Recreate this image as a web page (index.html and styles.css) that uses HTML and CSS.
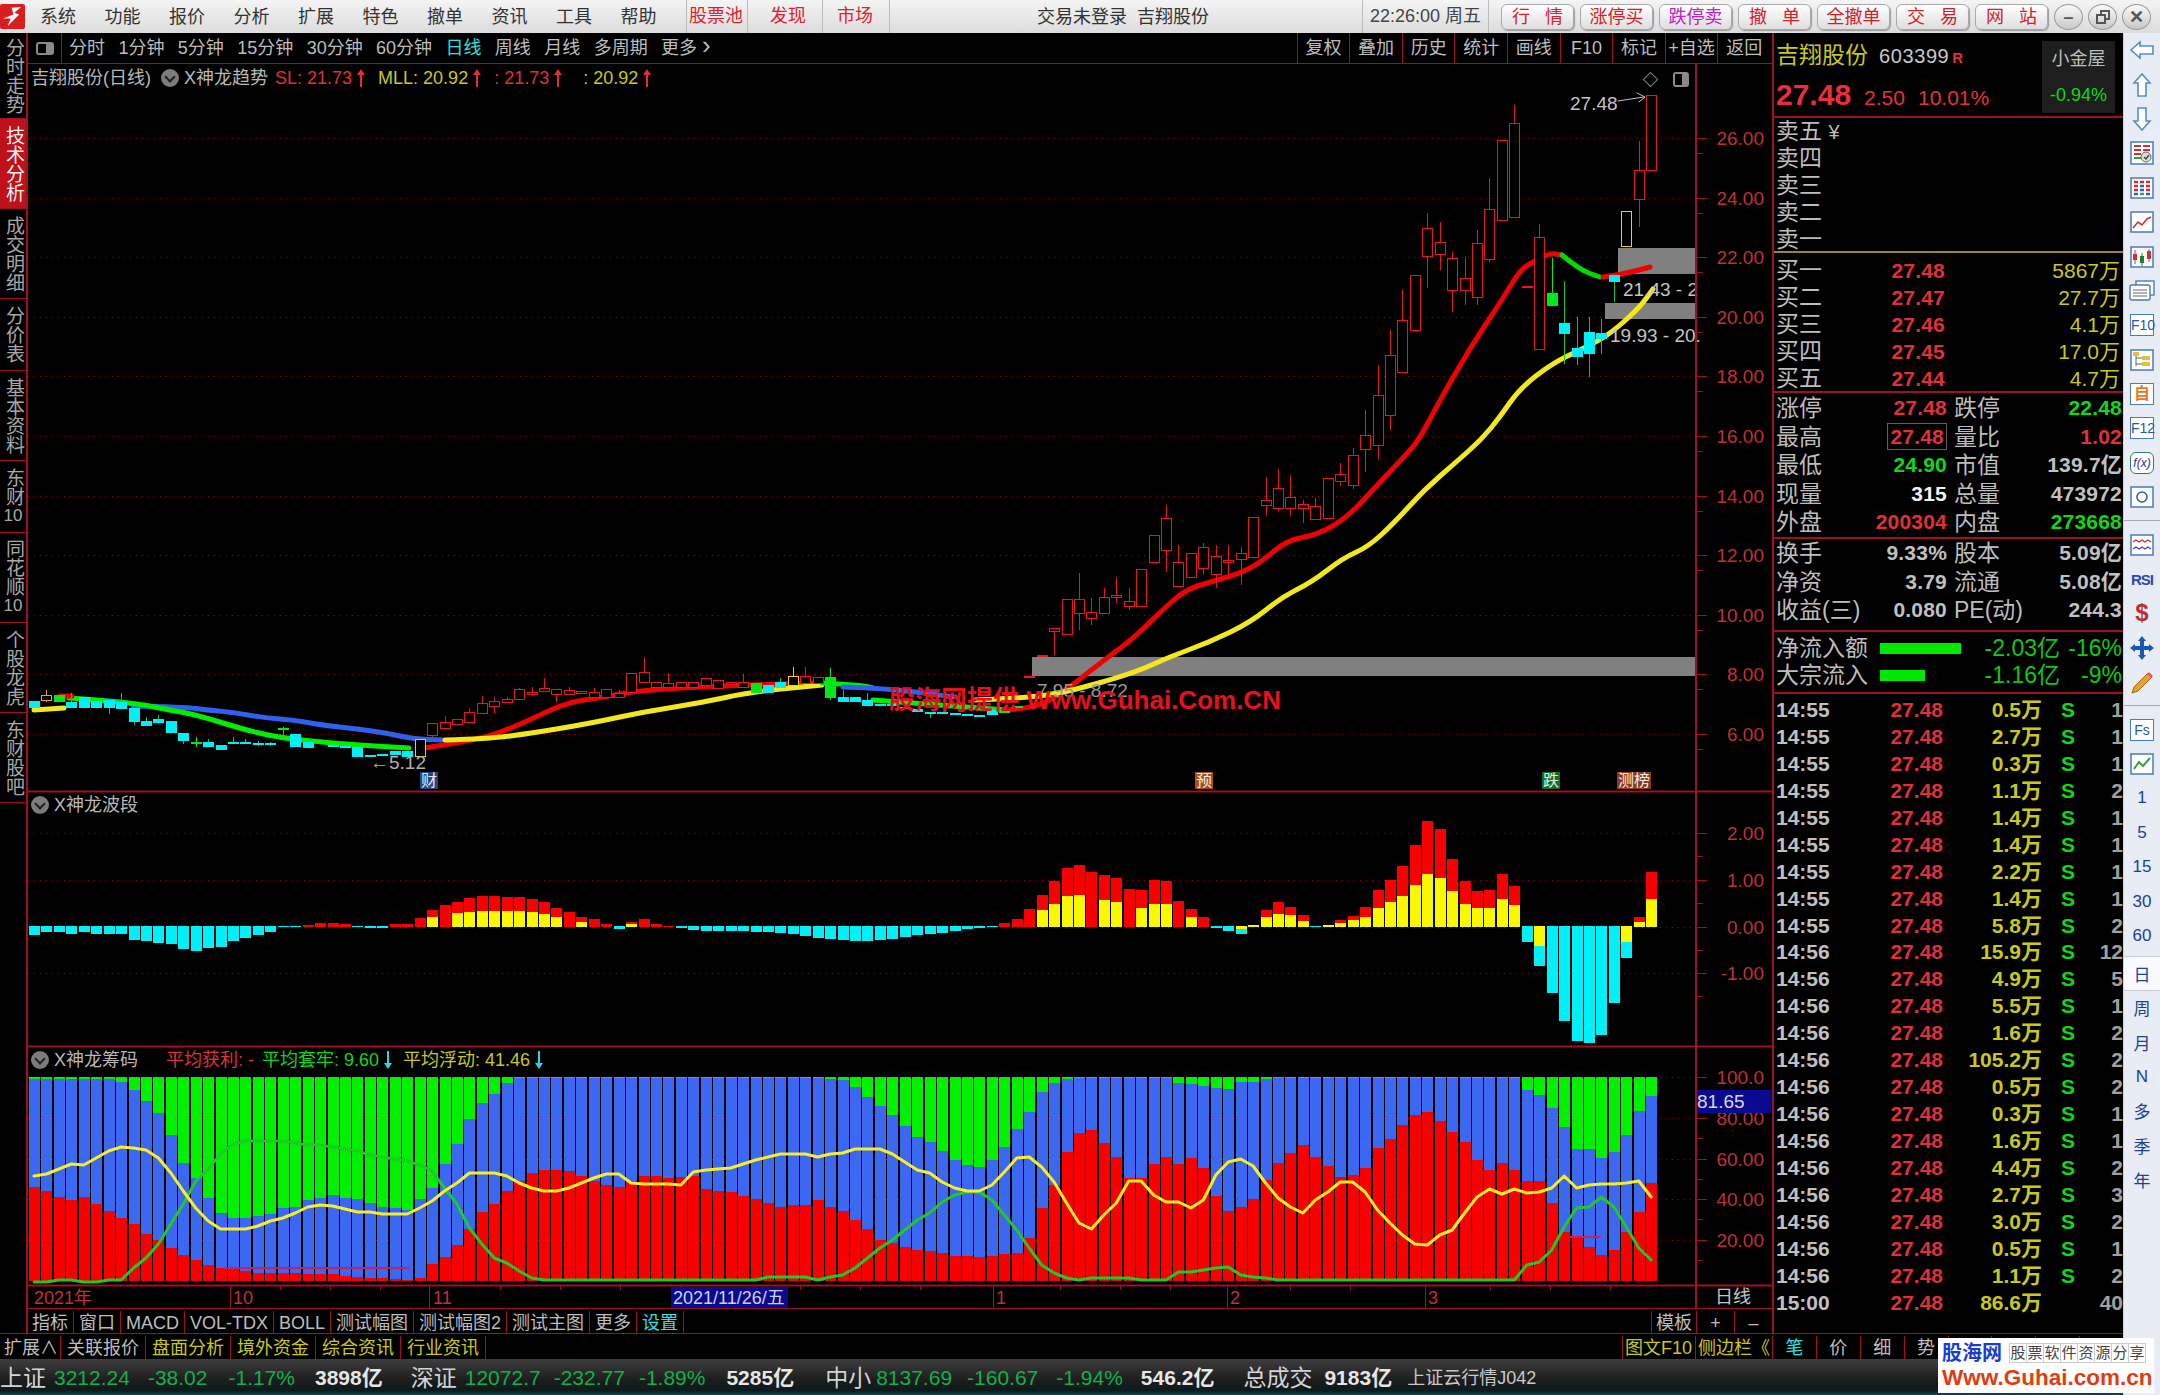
FILE: index.html
```html
<!DOCTYPE html>
<html lang="zh-CN">
<head>
  <meta charset="UTF-8">
  <title>吉翔股份 日线</title>
  <link rel="stylesheet" href="styles.css">
</head>
<body>
  <div class="app">
    <div class="titlebar">
      <svg class="logo" viewBox="0 0 26 26"><rect width="26" height="26" rx="2" fill="#d81e1e"/><path d="M3 15 L14 11 L12 4 L22 3 L15 9 L20 11 L8 23 L11 15 Z" fill="#f4f4f4"/></svg>
      <div class="menu">
        <span>系统</span><span>功能</span><span>报价</span><span>分析</span><span>扩展</span><span>特色</span><span>撤单</span><span>资讯</span><span>工具</span><span>帮助</span>
      </div>
      <div class="menu-hot">
        <span>股票池</span><span>发现</span><span>市场</span>
      </div>
      <div class="login">交易未登录&nbsp;&nbsp;吉翔股份</div>
      <div class="clock">22:26:00 周五</div>
      <div class="tradebtns">
        <span class="btn wide"><i>行</i><i>情</i></span>
        <span class="btn">涨停买</span>
        <span class="btn purple">跌停卖</span>
        <span class="btn wide"><i>撤</i><i>单</i></span>
        <span class="btn">全撤单</span>
        <span class="btn wide"><i>交</i><i>易</i></span>
        <span class="btn wide"><i>网</i><i>站</i></span>
      </div>
      <div class="winbtns">
        <span class="winbtn">–</span>
        <span class="winbtn"><svg width="16" height="16" viewBox="0 0 16 16"><rect x="2" y="6" width="8" height="8" fill="none" stroke="#555" stroke-width="2"/><path d="M6 5V2h8v8h-3" fill="none" stroke="#555" stroke-width="2"/></svg></span>
        <span class="winbtn close">✕</span>
      </div>
    </div>

    <div class="workspace">
      <div class="leftstack">
        <div class="mainrow">
          <div class="sidetabs">
            <div class="stab first">分时走势</div>
            <div class="stab on">技术分析</div>
            <div class="stab">成交明细</div>
            <div class="stab short">分价表</div>
            <div class="stab">基本资料</div>
            <div class="stab short">东财<span class="stabnum">10</span></div>
            <div class="stab">同花顺<span class="stabnum">10</span></div>
            <div class="stab">个股龙虎</div>
            <div class="stab">东财股吧</div>
          </div>

          <div class="center">
            <div class="toolbar">
              <div class="toolicon"><span class="toggle"></span></div>
              <div class="periods">
                <span>分时</span><span>1分钟</span><span>5分钟</span><span>15分钟</span><span>30分钟</span><span>60分钟</span><span class="cyan">日线</span><span>周线</span><span>月线</span><span>多周期</span><span>更多 <span class="more">›</span></span>
              </div>
              <div class="toolcells">
                <span>复权</span><span>叠加</span><span>历史</span><span>统计</span><span>画线</span><span>F10</span><span>标记</span><span>+自选</span><span>返回</span>
              </div>
            </div>

            <div class="chartwrap">
              <svg id="chart" class="chart" width="1744" height="1244" viewBox="28 64 1744 1244"></svg>

              <div class="legend legend-main">
                <span class="gray">吉翔股份(日线)</span>
                <span class="chev"></span>
                <span class="gray name">X神龙趋势</span>
                <span class="red item-sl">SL: 21.73</span><span class="uparrow"></span>
                <span class="yellow item-next">MLL: 20.92</span><span class="uparrow"></span>
                <span class="red item-next">: 21.73</span><span class="uparrow"></span>
                <span class="yellow item-last">: 20.92</span><span class="uparrow"></span>
              </div>
              <div class="legend legend-wave">
                <span class="chev"></span>
                <span class="gray name">X神龙波段</span>
              </div>
              <div class="legend legend-chip">
                <span class="chev"></span>
                <span class="gray name">X神龙筹码</span>
                <span class="red chip-first">平均获利: -</span>
                <span class="green">平均套牢: 9.60</span><span class="downarrow"></span>
                <span class="yellow">平均浮动: 41.46</span><span class="downarrow"></span>
              </div>
              <div class="chartmarks">
                <span class="mark-diamond"></span>
                <span class="toggle small"></span>
              </div>
              <div class="watermark">股海网提供 Www.Guhai.Com.CN</div>
              <div class="pricetag">81.65</div>
            </div>

            <div class="tabsbar">
              <div class="tabs">
                <span>指标</span><span>窗口</span><span>MACD</span><span>VOL-TDX</span><span>BOLL</span><span>测试幅图</span><span>测试幅图2</span><span>测试主图</span><span>更多</span><span class="cyan">设置</span>
              </div>
              <div class="tabs-right">
                <span class="tpl">模板</span><span class="pm">+</span><span class="pm">–</span>
              </div>
            </div>
          </div>

          <div class="quote">
            <div class="q-head">
              <div class="q-info">
                <div class="q-name"><span class="q-cn">吉翔股份</span><span class="q-code">603399</span><sup class="q-r">R</sup></div>
                <div class="q-price"><b>27.48</b><span>2.50</span><span>10.01%</span></div>
              </div>
              <div class="q-box"><span>小金屋</span><span class="green">-0.94%</span></div>
            </div>

            <div class="q-sell">
              <div>卖五 <span class="yuan">¥</span></div>
              <div>卖四</div>
              <div>卖三</div>
              <div>卖二</div>
              <div>卖一</div>
            </div>

            <div class="q-buy">
              <div class="bookrow"><span>买一</span><span class="num red">27.48</span><span class="vol">5867万</span></div>
              <div class="bookrow"><span>买二</span><span class="num red">27.47</span><span class="vol">27.7万</span></div>
              <div class="bookrow"><span>买三</span><span class="num red">27.46</span><span class="vol">4.1万</span></div>
              <div class="bookrow"><span>买四</span><span class="num red">27.45</span><span class="vol">17.0万</span></div>
              <div class="bookrow"><span>买五</span><span class="num red">27.44</span><span class="vol">4.7万</span></div>
            </div>

            <div class="q-stats first">
              <div class="statrow"><span>涨停</span><span class="num red">27.48</span><span class="lb2">跌停</span><span class="num green">22.48</span></div>
              <div class="statrow"><span>最高</span><span class="num red"><em class="boxed">27.48</em></span><span class="lb2">量比</span><span class="num red">1.02</span></div>
              <div class="statrow"><span>最低</span><span class="num green">24.90</span><span class="lb2">市值</span><span class="num">139.7亿</span></div>
              <div class="statrow"><span>现量</span><span class="num white">315</span><span class="lb2">总量</span><span class="num">473972</span></div>
              <div class="statrow"><span>外盘</span><span class="num red">200304</span><span class="lb2">内盘</span><span class="num green">273668</span></div>
            </div>

            <div class="q-stats second">
              <div class="statrow"><span>换手</span><span class="num">9.33%</span><span class="lb2">股本</span><span class="num">5.09亿</span></div>
              <div class="statrow"><span>净资</span><span class="num">3.79</span><span class="lb2">流通</span><span class="num">5.08亿</span></div>
              <div class="statrow"><span>收益(三)</span><span class="num">0.080</span><span class="lb2">PE(动)</span><span class="num">244.3</span></div>
            </div>

            <div class="q-flow">
              <div class="flowrow"><span>净流入额</span><span class="flowbar"><i class="bar-a"></i></span><span class="flowval">-2.03亿</span><span class="flowpct">-16%</span></div>
              <div class="flowrow"><span>大宗流入</span><span class="flowbar"><i class="bar-b"></i></span><span class="flowval">-1.16亿</span><span class="flowpct">-9%</span></div>
            </div>

            <div class="q-ticks" id="ticks"></div>
          </div>
        </div>

        <div class="extbar">
          <div class="ext-left">
            <span class="ext-first">扩展∧</span><span>关联报价</span><span class="yel">盘面分析</span><span class="yel">境外资金</span><span class="yel">综合资讯</span><span class="yel">行业资讯</span>
          </div>
          <div class="ext-right">
            <span class="yel">图文F10</span><span class="yel">侧边栏《</span><span class="cell cyan">笔</span><span class="cell">价</span><span class="cell">细</span><span class="cell">势</span><span class="cell"></span><span class="cell"></span><span class="cell"></span><span class="cell"></span>
          </div>
        </div>

        <div class="statusbar">
          <span class="idx">上证</span><span class="up m18">3212.24</span><span class="up m21">-38.02</span><span class="up m20">-1.17%</span><span class="amt m28">3898亿</span>
          <span class="idx">深证</span><span class="up m13">12072.7</span><span class="up m14">-232.77</span><span class="up m21">-1.89%</span><span class="amt m31">5285亿</span>
          <span class="idx short">中小</span><span class="up m15">8137.69</span><span class="up m18">-160.67</span><span class="up m18">-1.94%</span><span class="amt m29">546.2亿</span>
          <span class="idx m12">总成交</span><span class="amt m15">9183亿</span><span class="cloud">上证云行情J042</span>
        </div>
      </div>

      <div class="iconbar">
        <div class="ico"><svg width="24" height="20" viewBox="0 0 24 20"><path d="M1 10 L10 2 V6 H23 V14 H10 V18 Z" fill="#fff" stroke="#5a8ac8" stroke-width="1.6"/></svg></div>
        <div class="ico"><svg width="20" height="24" viewBox="0 0 20 24"><path d="M10 1 L18 10 H14 V23 H6 V10 H2 Z" fill="#fff" stroke="#5a8ac8" stroke-width="1.6"/></svg></div>
        <div class="ico"><svg width="20" height="24" viewBox="0 0 20 24"><path d="M10 23 L18 14 H14 V1 H6 V14 H2 Z" fill="#fff" stroke="#5a8ac8" stroke-width="1.6"/></svg></div>
        <div class="ico"><svg width="24" height="24" viewBox="0 0 24 24"><rect x="1" y="1" width="22" height="22" fill="#fff" stroke="#4a7ac0" stroke-width="1.5"/><path d="M4 5h7M13 5h7M4 9h7M13 9h7M4 13h7" stroke="#d03030" stroke-width="2"/><path d="M4 17h7" stroke="#30a040" stroke-width="2"/><circle cx="16" cy="16" r="5" fill="#ddd" stroke="#666"/><path d="M14 16l2 2 3-4" fill="none" stroke="#444" stroke-width="1.4"/></svg></div>
        <div class="ico"><svg width="24" height="22" viewBox="0 0 24 22"><rect x="1" y="1" width="22" height="20" fill="#fff" stroke="#4a7ac0" stroke-width="1.5"/><path d="M4 5h4M10 5h4M16 5h4M4 9h4M16 9h4M4 13h4M16 13h4" stroke="#d03030" stroke-width="2.4"/><path d="M10 9h4M10 13h4M4 17h4M16 17h4" stroke="#3060c0" stroke-width="2.4"/><path d="M10 17h4" stroke="#30a040" stroke-width="2.4"/></svg></div>
        <div class="ico"><svg width="24" height="22" viewBox="0 0 24 22"><rect x="1" y="1" width="22" height="20" fill="#fff" stroke="#4a7ac0" stroke-width="1.5"/><path d="M3 17L8 11L12 14L17 8L21 6" fill="none" stroke="#d03030" stroke-width="1.6"/></svg></div>
        <div class="ico"><svg width="24" height="22" viewBox="0 0 24 22"><rect x="1" y="1" width="22" height="20" fill="#fff" stroke="#4a7ac0" stroke-width="1.5"/><path d="M5 4v14" stroke="#d03030"/><rect x="3" y="8" width="4" height="6" fill="#d03030"/><path d="M12 7v13" stroke="#208030"/><rect x="10" y="10" width="4" height="7" fill="#208030"/><path d="M19 3v13" stroke="#d03030"/><rect x="17" y="5" width="4" height="8" fill="#d03030"/></svg></div>
        <div class="ico"><svg width="26" height="22" viewBox="0 0 26 22"><rect x="7" y="1" width="18" height="14" fill="#fff" stroke="#4a7ac0" stroke-width="1.4"/><rect x="1" y="5" width="20" height="15" rx="2" fill="#fff" stroke="#4a7ac0" stroke-width="1.4"/><path d="M4 10h14M4 13h14M4 16h14" stroke="#666" stroke-width="1.2"/></svg></div>
        <div class="ico"><span class="txtbox blue">F10</span></div>
        <div class="ico"><svg width="24" height="22" viewBox="0 0 24 22"><rect x="1" y="1" width="22" height="20" fill="#fff" stroke="#4a7ac0" stroke-width="1.5"/><path d="M6 5v12M6 9h6M6 15h6" stroke="#666" fill="none"/><rect x="3" y="3" width="6" height="4" fill="#e0c040"/><rect x="12" y="7" width="8" height="4" fill="#e0c040"/><rect x="12" y="13" width="8" height="4" fill="#e0c040"/></svg></div>
        <div class="ico"><span class="txtbox orange">自</span></div>
        <div class="ico"><span class="txtbox blue">F12</span></div>
        <div class="ico"><span class="txtbox round">f(x)</span></div>
        <div class="ico"><svg width="24" height="22" viewBox="0 0 24 22"><rect x="1" y="1" width="22" height="20" fill="#fff" stroke="#4a7ac0" stroke-width="1.5"/><circle cx="12" cy="11" r="5" fill="none" stroke="#3060a0" stroke-width="1.6"/></svg></div>
        <div class="icosep"></div>
        <div class="ico"><svg width="24" height="22" viewBox="0 0 24 22"><rect x="1" y="1" width="22" height="20" fill="#fff" stroke="#4a7ac0" stroke-width="1.5"/><path d="M3 8l3-2 3 2 3-2 3 2 3-2 3 2" fill="none" stroke="#d03030" stroke-width="1.4"/><path d="M3 15l3-2 3 2 3-2 3 2 3-2 3 2" fill="none" stroke="#5040c0" stroke-width="1.4"/></svg></div>
        <div class="ico"><span class="rsi">RSI</span></div>
        <div class="ico"><span class="dollar">$</span></div>
        <div class="ico"><svg width="24" height="24" viewBox="0 0 24 24"><path d="M12 0L16 5H14V10H19V8L24 12L19 16V14H14V19H16L12 24L8 19H10V14H5V16L0 12L5 8V10H10V5H8Z" fill="#1c58b0"/></svg></div>
        <div class="ico"><svg width="24" height="24" viewBox="0 0 24 24"><path d="M4 17L18 3L22 7L8 21L2 23Z" fill="#e8a030" stroke="#a06818"/><path d="M18 3L22 7" stroke="#e06060" stroke-width="3"/></svg></div>
        <div class="icosep"></div>
        <div class="ico"><span class="txtbox blue">Fs</span></div>
        <div class="ico"><svg width="24" height="22" viewBox="0 0 24 22"><rect x="1" y="1" width="22" height="20" fill="#fff" stroke="#4a7ac0" stroke-width="1.5"/><path d="M4 16L9 9L13 13L20 5" fill="none" stroke="#30a040" stroke-width="2"/></svg></div>
        <div class="ico per">1</div>
        <div class="ico per">5</div>
        <div class="ico per">15</div>
        <div class="ico per">30</div>
        <div class="ico per">60</div>
        <div class="ico per on">日</div>
        <div class="ico per">周</div>
        <div class="ico per">月</div>
        <div class="ico per">N</div>
        <div class="ico per">多</div>
        <div class="ico per">季</div>
        <div class="ico per">年</div>
      </div>
    </div>

    <div class="brand">
      <div class="brand-top"><b>股海网</b><span class="brand-slogan"><i>股</i><i>票</i><i>软</i><i>件</i><i>资</i><i>源</i><i>分</i><i>享</i></span></div>
      <div class="brand-url">Www.Guhai.com.cn</div>
    </div>
  </div>

  <script src="chart.js"></script>
</body>
</html>
```

FILE: styles.css
```css
* {
  box-sizing: border-box;
  margin: 0;
  padding: 0;
}

html, body {
  background-color: #000;
}

body {
  font-family: "Liberation Sans", "Noto Sans CJK SC", sans-serif;
  font-size: 18px;
  color: #bdbdbd;
}

.app {
  position: relative;
  width: 2160px;
  height: 1395px;
  display: flex;
  flex-direction: column;
  overflow: hidden;
}

.red { color: #e0303a; }
.green { color: #10d818; }
.yellow { color: #c8c81e; }
.cyan { color: #30e0e0; }
.white { color: #f0f0f0; }
.gray { color: #b8b8b8; }

/* barra de titulo */
.titlebar {
  height: 33px;
  display: flex;
  align-items: center;
  background: linear-gradient(#f4f4f4, #dcdcdc);
  color: #333;
  line-height: 24px;
}

.logo {
  width: 25px;
  height: 25px;
  margin-right: 15px;
  flex: none;
}

.menu {
  display: flex;
  gap: 28.5px;
  width: 646px;
}

.menu-hot {
  display: flex;
  height: 33px;
  align-items: center;
  color: #e02030;
  border-left: 1px solid #bbb;
}

.menu-hot span {
  padding: 0 16px 0 2px;
  margin-right: 12px;
  border-right: 1px solid #bbb;
  height: 33px;
  line-height: 33px;
}

.menu-hot span:first-child {
  padding-right: 4px;
  margin-right: 20px;
}

.login {
  margin-left: 135px;
  width: 325px;
  white-space: nowrap;
}

.clock {
  width: 127px;
  height: 33px;
  line-height: 33px;
  text-align: center;
  border-left: 1px solid #bbb;
  border-right: 1px solid #bbb;
  color: #444;
  flex: none;
}

.tradebtns {
  display: flex;
  gap: 6px;
  margin-left: 12px;
  color: #d42028;
}

.btn {
  width: 73px;
  height: 26px;
  line-height: 24px;
  border: 1px solid #aaa;
  border-radius: 6px;
  background: linear-gradient(#fff, #dedede);
  box-shadow: 1px 1px 1px #999;
  text-align: center;
}

.btn.wide {
  display: flex;
  justify-content: space-between;
  padding: 0 10px;
}

.btn i {
  font-style: normal;
}

.btn.purple {
  color: #c020c8;
}

.winbtns {
  display: flex;
  gap: 5px;
  margin-left: 6px;
}

.winbtn {
  width: 29px;
  height: 26px;
  border-radius: 50%;
  border: 1px solid #999;
  background: linear-gradient(#fbfbfb, #c8c8c8);
  display: flex;
  align-items: center;
  justify-content: center;
  color: #555;
  font-weight: bold;
}

/* area principal */
.workspace {
  height: 1362px;
  display: flex;
}

.leftstack {
  width: 2123px;
  display: flex;
  flex-direction: column;
}

.mainrow {
  height: 1300px;
  display: flex;
}

.sidetabs {
  width: 28px;
  flex: none;
  border-right: 2px solid #a01020;
  display: flex;
  flex-direction: column;
}

.stab {
  height: 90px;
  display: flex;
  align-items: center;
  justify-content: center;
  writing-mode: vertical-rl;
  text-orientation: upright;
  font-size: 19px;
  line-height: 26px;
  color: #a8a8a8;
  border-bottom: 1px solid #a01020;
}

.stab.first {
  height: 86px;
}

.stab.short {
  height: 72px;
}

.stab.on {
  background-color: #c01018;
  color: #f4f4f4;
}

.stabnum {
  writing-mode: horizontal-tb;
  display: inline-block;
  font-size: 17px;
  line-height: 20px;
}

.center {
  width: 1744px;
  flex: none;
  display: flex;
  flex-direction: column;
}

.toolbar {
  height: 31px;
  display: flex;
  align-items: center;
  border-bottom: 1px solid #a01020;
  line-height: 30px;
}

.toolicon {
  width: 34px;
  height: 30px;
  display: flex;
  align-items: center;
  justify-content: center;
  border-right: 1px solid #a01020;
}

.toggle {
  display: block;
  width: 18px;
  height: 13px;
  border: 2px solid #8a8a8a;
  border-radius: 3px;
  background: linear-gradient(to right, #000 55%, #8a8a8a 55%);
}

.periods {
  display: flex;
  gap: 13.4px;
  margin-left: 7px;
  white-space: nowrap;
}

.more {
  font-size: 26px;
  line-height: 20px;
}

.toolcells {
  margin-left: auto;
  margin-right: 2px;
  display: flex;
}

.toolcells span {
  width: 52.6px;
  height: 30px;
  text-align: center;
  border-left: 1px solid #a01020;
}

.chartwrap {
  position: relative;
  height: 1244px;
}

.chart {
  display: block;
}

.legend {
  position: absolute;
  display: flex;
  align-items: center;
  height: 24px;
  line-height: 24px;
  white-space: nowrap;
}

.legend-main {
  left: 3px;
  top: 2px;
}

.legend-wave {
  left: 3px;
  top: 729px;
}

.legend-chip {
  left: 3px;
  top: 984px;
}

.chev {
  width: 18px;
  height: 18px;
  border-radius: 50%;
  background-color: #7c7c7c;
  position: relative;
  margin: 0 5px 0 0;
}

.chev::after {
  content: "";
  position: absolute;
  left: 5px;
  top: 4px;
  width: 6px;
  height: 6px;
  border-right: 2px solid #222;
  border-bottom: 2px solid #222;
  transform: rotate(45deg);
}

.legend-main .gray:first-child {
  margin-right: 10px;
}

.item-sl {
  margin-left: 7px;
}

.item-next {
  margin-left: 13px;
}

.item-last {
  margin-left: 21px;
}

.uparrow, .downarrow {
  position: relative;
  display: block;
  width: 8px;
  height: 18px;
  margin-left: 5px;
}

.uparrow::before, .downarrow::before {
  content: "";
  position: absolute;
  left: 3px;
  width: 2px;
  height: 13px;
}

.uparrow::after, .downarrow::after {
  content: "";
  position: absolute;
  left: 0;
  border-left: 4px solid transparent;
  border-right: 4px solid transparent;
}

.uparrow::before {
  top: 5px;
  background-color: #e03030;
}

.uparrow::after {
  top: 0;
  border-bottom: 6px solid #e03030;
}

.downarrow {
  margin-right: 11px;
}

.downarrow::before {
  top: 0;
  background-color: #20d8e8;
}

.downarrow::after {
  bottom: 0;
  border-top: 6px solid #20d8e8;
}

.chip-first {
  margin: 0 8px 0 28px;
}

.chartmarks {
  position: absolute;
  left: 1617px;
  top: 8px;
  display: flex;
  align-items: center;
  gap: 17px;
}

.mark-diamond {
  width: 11px;
  height: 11px;
  border: 1px solid #808080;
  transform: rotate(45deg);
}

.toggle.small {
  width: 16px;
  height: 15px;
}

.watermark {
  position: absolute;
  left: 861px;
  top: 620px;
  font-size: 26px;
  line-height: 32px;
  font-weight: bold;
  color: #e8101c;
  white-space: nowrap;
}

.pricetag {
  position: absolute;
  left: 1669px;
  top: 1026px;
  width: 74px;
  height: 23px;
  line-height: 23px;
  background-color: #0a0a90;
  color: #d8d8d8;
  font-size: 19px;
}

.tabsbar {
  height: 25px;
  display: flex;
  justify-content: space-between;
  line-height: 24px;
  border-top: 1px solid #a01020;
  padding-top: 2px;
}

.tabs {
  display: flex;
}

.tabs span {
  padding: 0 5px;
  border-right: 1px solid #a01020;
  white-space: nowrap;
}

.tabs span:first-child {
  padding-left: 4px;
}

.tabs-right {
  display: flex;
}

.tabs-right span {
  border-left: 1px solid #a01020;
  text-align: center;
}

.tpl {
  width: 45px;
}

.pm {
  width: 38px;
}

/* painel de cotacao */
.quote {
  width: 351px;
  flex: none;
  border-left: 2px solid #a01020;
  font-size: 23px;
  line-height: 28px;
  overflow: hidden;
}

.q-head {
  height: 85px;
  display: flex;
  justify-content: space-between;
  border-bottom: 2px solid #a01020;
  padding: 8px 8px 4px 2px;
}

.q-name {
  display: flex;
  align-items: baseline;
  height: 30px;
}

.q-cn {
  color: #c8c820;
  font-size: 23px;
}

.q-code {
  color: #c8c8c8;
  font-size: 20px;
  margin-left: 11px;
  letter-spacing: 0.6px;
}

.q-r {
  color: #e03030;
  font-size: 15px;
  font-weight: bold;
  line-height: 14px;
  margin-left: 3px;
}

.q-price {
  color: #e8303a;
  font-size: 21px;
  display: flex;
  align-items: baseline;
  gap: 13px;
  margin-top: 10px;
}

.q-price b {
  font-size: 30px;
}

.q-box {
  width: 73px;
  height: 72px;
  background-color: #1e1e1e;
  display: flex;
  flex-direction: column;
  align-items: center;
  justify-content: space-around;
  font-size: 18px;
}

.q-sell {
  height: 135px;
  padding-left: 2px;
  border-bottom: 2px solid #a08040;
}

.q-sell div {
  height: 27px;
  line-height: 27px;
}

.yuan {
  font-size: 20px;
}

.q-buy {
  height: 140px;
  padding: 4px 0 0 2px;
  border-bottom: 2px solid #a01020;
}

.bookrow {
  display: grid;
  grid-template-columns: 72px 97px 175px;
  height: 27px;
  line-height: 27px;
}

.num {
  text-align: right;
  font-size: 21px;
  font-weight: bold;
  letter-spacing: 0.2px;
  color: #c0c0c0;
}

.num.red { color: #e0303a; }
.num.green { color: #10d818; }
.num.white { color: #f0f0f0; }

.vol {
  text-align: right;
  font-size: 21px;
  color: #c8c81e;
}

.q-stats {
  padding-left: 2px;
  border-bottom: 2px solid #a01020;
}

.q-stats.first {
  height: 146px;
  padding-top: 1px;
}

.q-stats.second {
  height: 93px;
}

.statrow {
  display: grid;
  grid-template-columns: 74px 97px 86px 89px;
  height: 28.6px;
  line-height: 28px;
  white-space: nowrap;
}

.lb2 {
  padding-left: 7px;
}

.boxed {
  font-style: normal;
  border: 1px solid #606060;
  padding: 1px 2px;
}

.q-flow {
  height: 62px;
  padding: 3px 0 0 2px;
  border-bottom: 2px solid #a01020;
}

.flowrow {
  display: grid;
  grid-template-columns: 104px 82px 98px 62px;
  height: 27px;
  line-height: 27px;
  font-size: 23px;
  white-space: nowrap;
}

.flowbar {
  display: flex;
  align-items: center;
}

.flowbar i {
  display: block;
  height: 11px;
  background-color: #00e800;
}

.bar-a { width: 81px; }
.bar-b { width: 45px; }

.flowval, .flowpct {
  text-align: right;
  color: #10c818;
  font-size: 23px;
}

.q-ticks {
  padding: 2px 0 0 2px;
}

.tickrow {
  display: grid;
  grid-template-columns: 102px 65px 99px 52px 29px;
  height: 26.95px;
  line-height: 27px;
  font-size: 21px;
  font-weight: bold;
  white-space: nowrap;
}

.tickrow .t { color: #c0c0c0; }
.tickrow .p { color: #e0303a; text-align: right; }
.tickrow .v { color: #c8c81e; text-align: right; }
.tickrow .s { color: #10d818; text-align: center; }
.tickrow .n { color: #a0a0a0; text-align: right; }

/* barra de extensoes */
.extbar {
  height: 27px;
  display: flex;
  justify-content: space-between;
  border-top: 1px solid #a01020;
  border-bottom: 1px solid #a01020;
  line-height: 25px;
  padding-top: 2px;
}

.ext-left, .ext-right {
  display: flex;
  white-space: nowrap;
}

.ext-left span {
  padding: 0 6px 0 6px;
  border-right: 1px solid #a01020;
}

.ext-left .ext-first {
  width: 61px;
  padding-left: 4px;
  padding-right: 0;
}

.ext-right > span {
  border-left: 1px solid #a01020;
  padding: 0 2px;
}

.ext-right .cell {
  width: 43.875px;
  text-align: center;
}

.ext-right .yel:first-child {
  padding: 0 3px 0 2px;
}

.yel {
  color: #c8c81e;
}

/* barra de status */
.statusbar {
  height: 35px;
  display: flex;
  align-items: center;
  background: linear-gradient(#3c3c3c 0%, #1c1c1c 60%, #0c1a1c 88%, #0e4a54 100%);
  font-size: 21px;
  line-height: 30px;
  white-space: nowrap;
}

.idx {
  font-size: 23px;
  color: #d4d4d4;
  margin-right: 8px;
}

.idx.short {
  margin-right: 5px;
}

.up {
  color: #12b04c;
}

.amt {
  color: #e6e6e6;
  font-weight: bold;
}

.m12 { margin-right: 12px; }
.m13 { margin-right: 13px; }
.m14 { margin-right: 14px; }
.m15 { margin-right: 15px; }
.m18 { margin-right: 18px; }
.m20 { margin-right: 20px; }
.m21 { margin-right: 21px; }
.m28 { margin-right: 28px; }
.m29 { margin-right: 29px; }
.m31 { margin-right: 31px; }

.cloud {
  color: #c8c8c8;
  font-size: 18px;
}

/* barra de icones */
.iconbar {
  width: 37px;
  background-color: #e8edf5;
  padding-top: 0;
  border-left: 1px solid #cdd3dc;
}

.ico {
  height: 34.4px;
  display: flex;
  align-items: center;
  justify-content: center;
}

.icosep {
  height: 13px;
  display: flex;
  align-items: center;
}

.icosep::after {
  content: "";
  display: block;
  width: 100%;
  border-top: 1px solid #a8a8a8;
}

.txtbox {
  width: 24px;
  height: 22px;
  line-height: 20px;
  border: 1.5px solid #4a7ac0;
  background-color: #fff;
  text-align: center;
  font-size: 14px;
  color: #2458a8;
}

.txtbox.orange {
  color: #e87828;
  font-weight: bold;
  font-size: 16px;
}

.txtbox.round {
  border-radius: 6px;
  font-style: italic;
  border-color: #2a7a70;
  color: #1a3890;
  font-size: 12px;
}

.rsi {
  font-size: 15px;
  font-weight: bold;
  color: #2c48b8;
  letter-spacing: -1px;
}

.dollar {
  font-size: 24px;
  line-height: 24px;
  font-weight: bold;
  color: #b83030;
}

.per {
  font-size: 17px;
  color: #204090;
}

.per.on {
  margin-top: 3px;
  background-color: #f8fafd;
  border-top: 1px solid #c4ccd8;
  border-bottom: 1px solid #c4ccd8;
}

/* marca d'agua */
.brand {
  position: absolute;
  left: 1938px;
  top: 1338px;
  width: 216px;
  height: 55px;
  background-color: #fff;
  padding: 3px 0 0 4px;
}

.brand-top {
  display: flex;
  align-items: center;
  height: 24px;
}

.brand-top b {
  color: #1a3cd0;
  font-size: 20px;
  line-height: 24px;
  margin-right: 7px;
}

.brand-slogan {
  display: flex;
  font-size: 17px;
  line-height: 18px;
  color: #444;
}

.brand-slogan i {
  font-style: normal;
  width: 18px;
  text-align: center;
  border: 1px solid #ccc;
  margin-right: -1px;
  font-size: 15px;
}

.brand-url {
  color: #e03c10;
  font-size: 22.5px;
  line-height: 26px;
  font-weight: bold;
  white-space: nowrap;
}
```

FILE: chart.js
```js
// Monta o grafico de velas e os dois paineis inferiores
const svg = document.getElementById("chart");
const PITCH = 12.44;
const BAR_W = 10;
const RULE = "#a01020";
const LABEL = "#c03038";

function barX(i) {
  return 34 + PITCH * i;
}

function rep(n, v) {
  return Array(n).fill(v);
}

// velas: tipo, topo, base, maxima, minima (y em pixels)
const candles = [
  ["c",701,708],["o",695,700,690,702],["g",695,702],["c",702,708,693],["c",697,708],["c",701,708],["c",700,708,700,714],["c",702,709,693],
  ["c",708,722,708,725],["c",721,726,717],["c",719,723,715,724],["c",721,733],["c",733,741,733,744],["g",742,743,737,747],["c",742,747,739],["c",745,750],
  ["c",742,744,737],["c",742,744,739],["c",743,744,741,746],["c",743,745,742,746],["g",728,729,727,739],["c",734,747],["c",742,748],["g",740,741],
  ["c",745,747],["c",746,748],["c",747,757],["c",755,757],["c",754,756],["c",751,755],["c",751,757],["y",739,756],
  ["r",723,735,723,738],["r",722,728,716],["r",719,724],["r",712,722,708],["r",703,713,696],["r",701,706,697,713],["r",699,702,697],["r",689,699,688],
  ["r",692,694,687,696],["r",688,691,678],["r",689,694,689,702],["r",690,694,687],["r",691,693],["r",692,697,688],["r",689,697],["r",693,697,690],
  ["r",673,692],["r",672,682,658],["r",682,687],["r",683,687,673],["r",682,687],["r",682,687],["r",678,685],["r",680,688],
  ["r",682,684],["r",682,687,674],["g",683,693],["c",685,693],["c",682,688,678],["y",676,685,667],["r",676,683,667],["r",677,683],
  ["g",677,698,668,700],["c",697,702,690],["c",697,702],["c",700,706,693],["c",704,706],["c",704,706],["c",707,709],["c",709,712],
  ["c",712,714,712,718],["c",712,714],["c",713,715],["c",714,715],["c",715,717],["c",710,715],["g",711,712],["g",706,707],
  ["r",676,677],["r",655,656],["r",628,631,628,655],["r",599,634],["r",599,613,573,630],["r",612,618,598,625],["r",597,613,588],["r",595,597,577,603],
  ["r",601,606,588,610],["r",569,606],["r",535,562,535,563],["r",518,550,505,572],["r",562,586,545,587],["r",553,577],["r",547,568,543,574],["r",556,574,545,588],
  ["r",560,562,545,575],["r",553,559,547,585],["r",517,557],["r",500,505,477,516],["r",488,508,469,511],["r",497,508,475,516],["r",504,508,500,523],["r",506,519,498],
  ["r",478,518],["r",474,481,463,486],["r",455,485,448,489],["r",435,449,410,472],["r",395,445,365,460],["r",355,415,330,430],["r",320,372,290],["r",275,330],
  ["r",228,256,213,288],["r",242,254,222,270],["r",258,290,252,312],["r",278,290,257,305],["r",243,297,230,305],["r",209,259,178,262],["r",140,220],["r",123,217,105],
  ["r",286,287],["r",237,349,224],["g",293,306,258],["c",323,334,281,364],["c",348,357,317,365],["c",332,354,317,377],["c",333,339,319,354],["c",275,282,275,302],
  ["y",211,246],["r",170,199,141,227],["r",95,170]
];

// medias moveis do painel principal, trecho a trecho
const maLines = [
  ["#3060f0", [[133,706],[184,707],[207,710],[230,712],[266,718],[294,720],[321,725],[358,729],[386,733],[413,739],[443,740]]],
  ["#00ee00", [[69,698],[129,702],[170,710],[197,715],[239,728],[275,737],[321,742],[358,745],[409,748]]],
  ["#f2e81c", [[34,710],[64,708]]],
  ["#f00000", [[60,696],[72,696]]],
  ["#f00000", [[425,748],[455,743],[487,737],[519,725],[565,703],[597,698],[643,690],[720,686],[751,685],[817,683]]],
  ["#f2e81c", [[445,740],[487,739],[533,733],[592,723],[643,712],[700,703],[751,692],[822,685]]],
  ["#00ee00", [[822,683],[860,685],[873,688]]],
  ["#3060f0", [[843,687],[884,688],[955,697]]],
  ["#00ee00", [[873,700],[940,705],[1006,710]]],
  ["#f00000", [[1006,710],[1032,708],[1057,697],[1108,657],[1134,638],[1159,613],[1185,590],[1210,582],[1241,573],[1261,562],[1287,540],[1317,535],[1348,517],[1379,483],[1404,457],[1419,440],[1440,400],[1470,348],[1500,303],[1520,270],[1533,262],[1550,253],[1562,255]]],
  ["#f2e81c", [[975,700],[1027,698],[1067,692],[1134,673],[1169,657],[1210,642],[1251,622],[1282,597],[1312,582],[1343,558],[1368,547],[1394,523],[1424,490],[1455,463],[1481,440],[1500,417],[1520,388],[1553,363],[1580,350],[1600,340],[1617,328],[1640,307],[1653,289]]],
  ["#00d800", [[1562,255],[1580,270],[1600,277]]],
  ["#f00000", [[1603,277],[1620,275],[1650,267]]]
];

// painel do meio: [altura, parte amarela]
const wave = [
  -9,-6,-6,-8,-6,-8,-8,-8,-14,-15,-17,-18,-23,-25,-22,-21,-15,-12,-9,-6,-1,-1,2,4,4,3,-1,-2,-2,3,3,9,
  [17,10],22,[25,14],[29,15],[31,16],[31,16],[30,16],[30,16],[28,15],[25,13],[19,10],15,[10,5],8,3,-3,[5,3],8,3,1,-2,-4,-5,-5,
  -5,-5,-6,-6,-7,-8,-10,-12,-13,-14,-15,-15,-14,-13,-11,-9,-8,-7,-5,-3,-2,-1,
  4,8,18,[32,17],[46,23],[59,31],[62,32],55,[52,27],[49,25],38,[37,19],[47,23],[46,23],26,[18,10],10,-2,-5,[-8,-3],[2,2],[17,10],[25,13],[20,12],[12,6],-1,[2,2],
  [7,4],[11,7],[20,10],[37,19],[47,25],[61,31],[82,42],[106,53],[98,49],[68,36],[46,23],[36,19],[37,19],[53,28],[41,22],-16,[-40,-20],-67,-95,-115,-117,-109,-77,[-32,-16],[10,5],[55,28]
];

// painel de baixo: base do verde e topo do vermelho (y a partir de 1077)
const chipG = [].concat(rep(7,2),[5,13,24,36,58,86,101,121,136,141,141,139,137,131,130,123,121,118,121,122,126,130,131,133,122,111,87,67,42,26,17,6],
  rep(25,1),[2,3,10,20,29,38,49,60,65,74,83,88,90,83,70,52,35,15,6,2],rep(8,1),[6,7,9,11,12,5,5,2],rep(20,1),[13,18,31,50,72,72,81,75,58,34,19]);
const chipR = [110,114,120,123,120,127,134,141,147,157,163,171,178,183,188,191,191,194,196,196,196,196,197,197,197,199,200,201,201,202,203,201,187,180,168,152,135,127,114,104,96,93,93,94,99,104,108,110,104,99,99,101,100,99,112,114,
  115,119,122,126,130,128,128,123,130,134,143,152,163,166,170,173,174,176,179,179,180,179,177,176,161,131,108,75,56,53,66,80,101,101,87,80,87,81,91,119,134,130,122,103,86,76,68,80,89,100,98,91,71,62,48,38,35,44,55,65,83,93,86,93,104,104,126,155,160,170,178,173,155,135,106];
const chipY = [99,97,92,87,88,81,74,70,71,73,81,96,114,131,144,152,152,152,149,144,141,136,130,128,129,132,135,135,137,137,137,131,124,114,106,96,96,96,99,106,111,114,114,111,106,101,97,97,106,107,107,107,108,95,93,92,
  91,87,83,80,77,77,77,80,77,76,72,72,72,77,85,93,96,105,111,114,114,108,95,81,80,90,105,126,146,152,138,126,104,104,118,125,125,131,123,98,85,82,89,106,121,130,136,123,115,105,105,115,133,146,158,167,168,158,153,136,120,112,117,112,116,115,111,99,111,108,107,107,106,104,120];
const chipL = [].concat([205,205,203,203,205,205,203,203,191,181,167,147,127,104,92,77,67,64,64,64,64,66,68,68,70,72,74,78,80,82,84,88,94,111,127,151,167,181,186,194,201],
  rep(18,203),rep(4,200),[203,200,198,191,181,171,163,153,143,136,125,118,115,115,123,138,153,171,188,196,201,203,201,201,201,201,203,203,203,195,195,193,191,190,198,200,201],
  rep(20,203),[188,185,173,150,131,130,120,130,150,171,183]);

const parts = [];

function line(x1, y1, x2, y2, color, extra) {
  parts.push(`<line x1="${x1}" y1="${y1}" x2="${x2}" y2="${y2}" stroke="${color}" ${extra || ""}/>`);
}

function rect(x, y, w, h, fill, extra) {
  parts.push(`<rect x="${x}" y="${y}" width="${w}" height="${h}" fill="${fill}" ${extra || ""}/>`);
}

function label(x, y, text, fill, anchor, size) {
  parts.push(`<text x="${x}" y="${y}" fill="${fill}" text-anchor="${anchor || "end"}" font-size="${size || 19}" dominant-baseline="central">${text}</text>`);
}

function poly(points, color, width) {
  const pts = points.map(function (p) { return p.join(","); }).join(" ");
  parts.push(`<polyline points="${pts}" fill="none" stroke="${color}" stroke-width="${width}" stroke-linejoin="round" stroke-linecap="round"/>`);
}

// curva suave pelos pontos medios, para as medias moveis
function smooth(points, color, width) {
  let d = `M${points[0].join(" ")}`;
  for (let i = 1; i < points.length - 1; i++) {
    const mx = (points[i][0] + points[i + 1][0]) / 2;
    const my = (points[i][1] + points[i + 1][1]) / 2;
    d += ` Q${points[i].join(" ")} ${mx} ${my}`;
  }
  d += ` L${points[points.length - 1].join(" ")}`;
  parts.push(`<path d="${d}" fill="none" stroke="${color}" stroke-width="${width}" stroke-linecap="round"/>`);
}

function gridRow(y, major) {
  line(28, y + 0.5, 1695, y + 0.5, "#8a1018", 'stroke-dasharray="1 5"');
  line(1696, y + 0.5, major ? 1707 : 1703, y + 0.5, RULE);
}

// painel principal
[26,24,22,20,18,16,14,12,10,8,6].forEach(function (p) {
  const y = Math.round(138 + (26 - p) * 29.8);
  gridRow(y, true);
  line(1696, y + 15.5, 1703, y + 15.5, RULE);
  label(1764, y, p.toFixed(2), LABEL);
});

rect(1032, 657, 664, 19, "#808080");
rect(1618, 248, 78, 26, "#808080");
rect(1605, 303, 91, 16, "#808080");

maLines.forEach(function (m) {
  smooth(m[1], m[0], 5);
});

candles.forEach(function (c, i) {
  const x = Math.round(barX(i) - BAR_W / 2);
  const mid = Math.round(barX(i)) + 0.5;
  const type = c[0];
  const top = c[1], bottom = c[2];
  const hi = c[3] === undefined ? top : c[3];
  const lo = c[4] === undefined ? bottom : c[4];
  const color = { r: "#e81820", c: "#00f0f8", g: "#00e818", y: "#e8d020", o: "#f0a020" }[type];
  const wick = type === "c" ? "#10c830" : color;
  line(mid, hi, mid, lo, wick);
  if (type === "c" || type === "g") {
    rect(x, top, BAR_W + 1, Math.max(bottom - top, 2), color);
  } else {
    rect(x + 0.5, top + 0.5, BAR_W, Math.max(bottom - top, 1), "#000", `stroke="${color}"`);
  }
});

// textos sobre o grafico
label(1570, 103, "27.48", "#c4c4c4", "start");
poly([[1618, 101], [1644, 97]], "#c4c4c4", 1);
poly([[1637, 93], [1645, 97], [1639, 102]], "#c4c4c4", 1);
label(1623, 289, "21.43 - 2", "#c4c4c4", "start");
label(1610, 335, "19.93 - 20.", "#c4c4c4", "start");
label(1037, 690, "7.95 - 8.72", "#999", "start");
label(370, 762, "←5.12", "#b0b0b0", "start");

// marcadores de evento
[[420, "财", "#1c4a80"], [1195, "预", "#a84c18"], [1542, "跌", "#107020"], [1617, "测榜", "#8c3c18"]].forEach(function (e) {
  const w = e[1].length * 16 + 2;
  rect(e[0], 772, w, 17, e[2]);
  label(e[0] + w / 2, 780, e[1], "#ececec", "middle", 16);
});

line(28, 791.5, 1772, 791.5, RULE, 'stroke-width="2"');

// painel do meio
[[2, 833], [1, 880], [0, 927], [-1, 973]].forEach(function (g) {
  gridRow(g[1], true);
  line(1696, g[1] + 23.5, 1703, g[1] + 23.5, RULE);
  label(1764, g[1], g[0].toFixed(2), LABEL);
});
wave.forEach(function (v, i) {
  const x = Math.round(barX(i) - BAR_W / 2);
  const h = Array.isArray(v) ? v[0] : v;
  const part = Array.isArray(v) ? v[1] : 0;
  if (h >= 0) {
    rect(x, 927 - h, BAR_W + 1, h, "#f80000");
    if (part) rect(x, 927 - part, BAR_W + 1, part, "#f8f800");
  } else {
    rect(x, 926, BAR_W + 1, -h, "#00f0f8");
    if (part) rect(x, 926, BAR_W + 1, -part, "#f8f800");
  }
});

line(28, 1046.5, 1772, 1046.5, RULE, 'stroke-width="2"');

// painel de baixo
[[100, "100.0"], [80, "80.00"], [60, "60.00"], [40, "40.00"], [20, "20.00"]].forEach(function (g) {
  const y = Math.round(1077 + (100 - g[0]) * 2.04);
  gridRow(y, true);
  line(1696, y + 20.5, 1703, y + 20.5, RULE);
  label(1764, y, g[1], LABEL);
});
chipG.forEach(function (g, i) {
  const x = Math.round(barX(i) - BAR_W / 2);
  const r = chipR[i];
  rect(x, 1077, BAR_W + 1, g, "#00f000");
  rect(x, 1077 + g, BAR_W + 1, r - g, "#3a68f0");
  rect(x, 1077 + r, BAR_W + 1, 204 - r, "#f80000");
});
line(224, 1268, 409, 1268, "#c82060", 'stroke-width="2"');
line(1570, 1237, 1601, 1237, "#c82060", 'stroke-width="2"');
poly(chipL.map(function (v, i) { return [barX(i), 1077 + v]; }), "#20c828", 3);
poly(chipY.map(function (v, i) { return [barX(i), 1077 + v]; }), "#f8ee28", 3);

line(1696, 64, 1696, 1308, RULE, 'stroke-width="2"');
line(28, 1285.5, 1772, 1285.5, RULE, 'stroke-width="2"');

// eixo de datas
[230, 429, 993, 1227, 1425].forEach(function (x) {
  line(x + 0.5, 1286, x + 0.5, 1308, RULE);
});
[280, 330, 380, 500, 560, 620, 680, 800, 860, 920, 1060, 1120, 1170, 1290, 1350, 1490, 1550, 1610].forEach(function (x) {
  line(x + 0.5, 1286, x + 0.5, 1290, RULE);
});
label(34, 1298, "2021年", LABEL, "start", 18);
label(233, 1298, "10", LABEL, "start", 18);
label(433, 1298, "11", LABEL, "start", 18);
label(996, 1298, "1", LABEL, "start", 18);
label(1230, 1298, "2", LABEL, "start", 18);
label(1428, 1298, "3", LABEL, "start", 18);
rect(671, 1287, 117, 21, "#0a0a90");
label(673, 1298, "2021/11/26/五", "#d0d0e8", "start", 18);
label(1733, 1297, "日线", "#c4c4c4", "middle", 18);

svg.innerHTML = parts.join("");

// lista de negocios
const ticks = [
  ["14:55","0.5",1],["14:55","2.7",1],["14:55","0.3",1],["14:55","1.1",2],["14:55","1.4",1],["14:55","1.4",1],["14:55","2.2",1],["14:55","1.4",1],["14:55","5.8",2],
  ["14:56","15.9",12],["14:56","4.9",5],["14:56","5.5",1],["14:56","1.6",2],["14:56","105.2",2],["14:56","0.5",2],["14:56","0.3",1],["14:56","1.6",1],["14:56","4.4",2],["14:56","2.7",3],["14:56","3.0",2],["14:56","0.5",1],["14:56","1.1",2],
  ["15:00","86.6",40]
];
document.getElementById("ticks").innerHTML = ticks.map(function (t) {
  const side = t[0] === "15:00" ? "" : "S";
  return `<div class="tickrow"><span class="t">${t[0]}</span><span class="p">27.48</span><span class="v">${t[1]}万</span><span class="s">${side}</span><span class="n">${t[2]}</span></div>`;
}).join("");
```
